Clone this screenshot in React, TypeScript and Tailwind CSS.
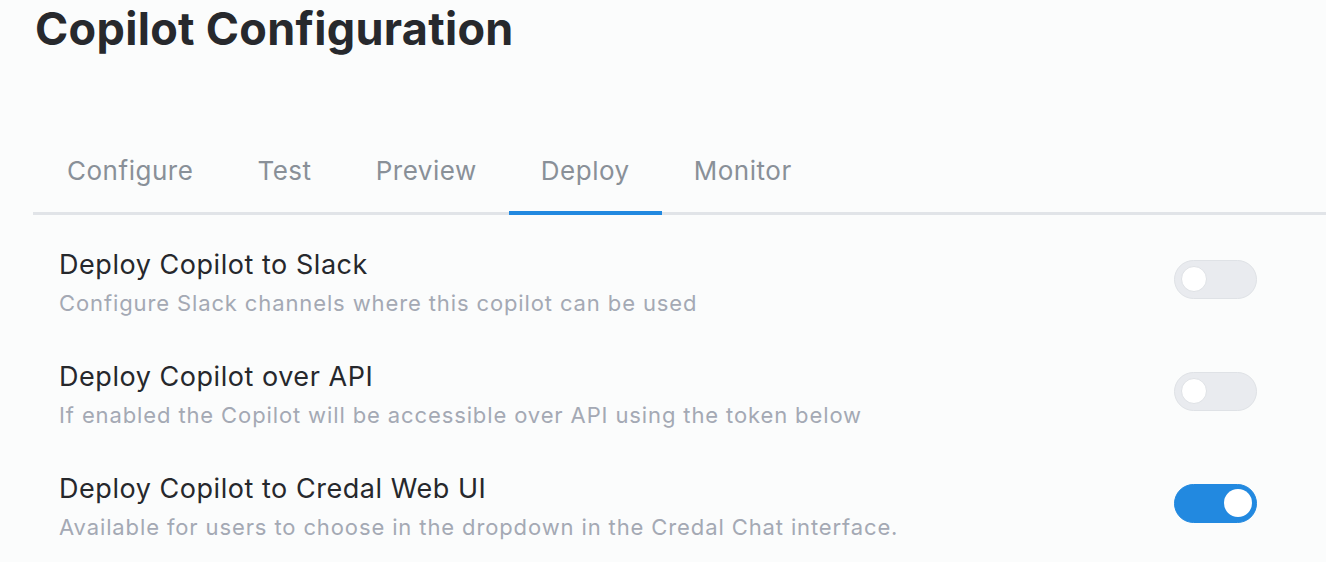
import React, { useState } from 'react';

const tabs = ['Configure', 'Test', 'Preview', 'Deploy', 'Monitor'];

interface RowProps {
  title: string;
  description: string;
  enabled: boolean;
  onToggle: () => void;
}

const Toggle: React.FC<{ on: boolean; onClick: () => void }> = ({ on, onClick }) => (
  <button
    onClick={onClick}
    className={`relative mb-[8px] h-[39px] w-[83px] shrink-0 rounded-full border ${
      on ? 'bg-[#2289e0] border-[#2289e0]' : 'bg-[#e9ebef] border-[#dfe2e6]'
    }`}
  >
    <span
      className={`absolute top-1/2 -translate-y-1/2 rounded-full bg-white ${
        on ? 'right-[4px] h-[28px] w-[28px]' : 'left-[6px] h-[26px] w-[26px] border border-[#dfe2e6]'
      }`}
    />
  </button>
);

const SettingRow: React.FC<RowProps> = ({ title, description, enabled, onToggle }) => (
  <div className="flex items-center justify-between">
    <div className="flex flex-col">
      <span className="text-[27px] leading-[36px] tracking-[0.02em] text-[#26282c]">{title}</span>
      <span className="text-[22px] leading-[32px] tracking-[0.04em] text-[#a4a9b4] mt-[4px]">{description}</span>
    </div>
    <Toggle on={enabled} onClick={onToggle} />
  </div>
);

export default function App() {
  const [slack, setSlack] = useState(false);
  const [api, setApi] = useState(false);
  const [web, setWeb] = useState(true);

  return (
    <div
      className="min-h-screen w-full bg-[#fbfcfc] pl-[33px] overflow-hidden"
      style={{ fontFamily: 'Inter, "Noto Sans", sans-serif' }}
    >
      <h1 className="pl-[2px] pt-[6px] text-[45px] leading-[45px] font-bold text-[#27292d] tracking-[0.3px]">
        Copilot Configuration
      </h1>

      <div className="mt-[102px] flex pl-[2px] border-b-[3px] border-[#e1e4e8]">
        {tabs.map((t) => (
          <div
            key={t}
            className={`px-8 pb-[22px] text-[26px] leading-[36px] tracking-[0.02em] text-[#899098] -mb-[3px] border-b-[4px] ${
              t === 'Deploy' ? 'border-[#2289e0]' : 'border-transparent'
            }`}
          >
            {t}
          </div>
        ))}
      </div>

      <div className="pl-[26px] pr-[69px] pt-[32px] flex flex-col gap-[40px]">
        <SettingRow
          title="Deploy Copilot to Slack"
          description="Configure Slack channels where this copilot can be used"
          enabled={slack}
          onToggle={() => setSlack(!slack)}
        />
        <SettingRow
          title="Deploy Copilot over API"
          description="If enabled the Copilot will be accessible over API using the token below"
          enabled={api}
          onToggle={() => setApi(!api)}
        />
        <SettingRow
          title="Deploy Copilot to Credal Web UI"
          description="Available for users to choose in the dropdown in the Credal Chat interface."
          enabled={web}
          onToggle={() => setWeb(!web)}
        />
      </div>
    </div>
  );
}
